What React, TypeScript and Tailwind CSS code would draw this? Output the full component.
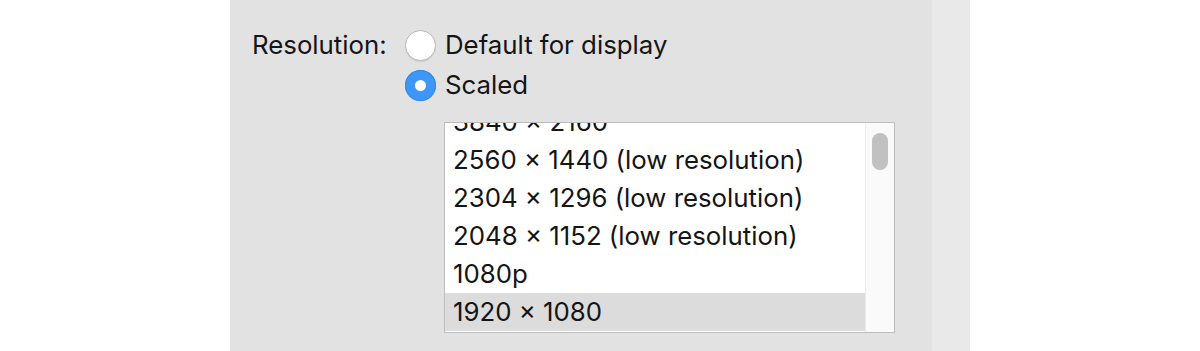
import React from 'react';

const rows = [
  '3840 × 2160',
  '2560 × 1440 (low resolution)',
  '2304 × 1296 (low resolution)',
  '2048 × 1152 (low resolution)',
  '1080p',
  '1920 × 1080',
];

const Radio: React.FC<{ checked?: boolean; label: string }> = ({ checked, label }) => (
  <div className="flex items-center h-[40px]">
    {checked ? (
      <span className="w-[31px] h-[31px] rounded-full bg-[#3e97f7] flex items-center justify-center shadow-[inset_0_0_0_1px_#3489e8]">
        <span className="w-[11px] h-[11px] rounded-full bg-white" />
      </span>
    ) : (
      <span className="w-[31px] h-[31px] rounded-full bg-white border border-[#b8b8b8] shadow-[0_1px_1px_rgba(0,0,0,0.08)]" />
    )}
    <span className="ml-[9px]">{label}</span>
  </div>
);

const App: React.FC = () => {
  const selected = '1920 × 1080';

  return (
    <div className="flex w-[1200px] h-[351px] bg-white text-[25.8px] text-[#151515] font-['Inter','Liberation_Sans',sans-serif] overflow-hidden">
      <div className="w-[230px] shrink-0" />

      <div className="w-[702px] shrink-0 bg-[#e2e2e2] pt-[25px] pl-[22px] flex">
        <div className="w-[153px] h-[40px] flex items-center">Resolution:</div>

        <div className="flex flex-col">
          <Radio label="Default for display" />
          <Radio checked label="Scaled" />

          {/* list box */}
          <div className="ml-[39px] mt-[17px] w-[451px] h-[211px] border border-[#bdbdbd] bg-white flex overflow-hidden">
            <div className="flex-1 overflow-hidden">
              <div className="mt-[-20px]">
                {rows.map(r => (
                  <div
                    key={r}
                    className={`h-[38px] pl-[8px] pt-[1px] flex items-center ${r === selected ? 'bg-[#dcdcdc]' : ''}`}
                  >
                    {r}
                  </div>
                ))}
              </div>
            </div>
            <div className="w-[29px] shrink-0 bg-[#fafafa] border-l border-[#ececec] pt-[10px] flex justify-center">
              <div className="w-[16px] h-[37px] rounded-full bg-[#c1c1c1]" />
            </div>
          </div>
        </div>
      </div>

      <div className="w-[38px] shrink-0 bg-[#e9e9e9]" />
    </div>
  );
};

export default App;
